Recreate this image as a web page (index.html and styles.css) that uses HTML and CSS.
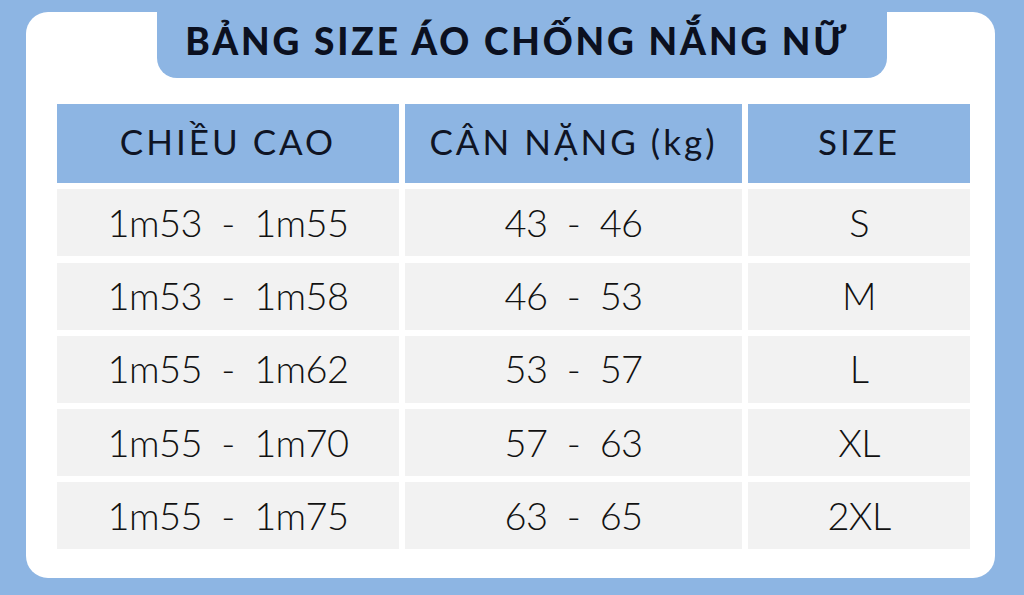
FILE: index.html
```html
<!DOCTYPE html>
<html lang="vi">
<head>
<meta charset="utf-8">
<link rel="stylesheet" href="styles.css">
</head>
<body>
<div class="card">
  <div class="tab"><h1 class="title">BẢNG SIZE ÁO CHỐNG NẮNG NỮ</h1></div>
  <div class="table">
    <div class="cell head">CHIỀU CAO</div>
    <div class="cell head">CÂN NẶNG (kg)</div>
    <div class="cell head">SIZE</div>

    <div class="cell">1m53  -  1m55</div>
    <div class="cell">43  -  46</div>
    <div class="cell">S</div>

    <div class="cell">1m53  -  1m58</div>
    <div class="cell">46  -  53</div>
    <div class="cell">M</div>

    <div class="cell">1m55  -  1m62</div>
    <div class="cell">53  -  57</div>
    <div class="cell">L</div>

    <div class="cell">1m55  -  1m70</div>
    <div class="cell">57  -  63</div>
    <div class="cell">XL</div>

    <div class="cell">1m55  -  1m75</div>
    <div class="cell">63  -  65</div>
    <div class="cell">2XL</div>
  </div>
</div>
</body>
</html>
```
FILE: styles.css
```css
html, body {
  margin: 0;
  padding: 0;
}
body {
  background: #8db5e3;
  width: 1024px;
  height: 595px;
  overflow: hidden;
  font-family: "Lato", "Liberation Sans", sans-serif;
  color: #151515;
}
.card {
  margin: 12px 0 0 26px;
  width: 969px;
  height: 566px;
  background: #ffffff;
  border-radius: 22px;
  box-sizing: border-box;
}
.tab {
  margin-left: 131px;
  width: 730px;
  height: 66px;
  background: #8db5e3;
  border-radius: 0 0 20px 20px;
  display: flex;
  align-items: center;
  justify-content: center;
  box-sizing: border-box;
  padding: 0 10px 10px 0;
}
.title {
  margin: 0;
  font-family: "Lato", sans-serif;
  font-weight: 900;
  font-size: 37px;
  line-height: 1;
  color: #0b1020;
  letter-spacing: 2.9px;
}
.table {
  margin: 26px 0 0 31px;
  width: 913px;
  display: grid;
  grid-template-columns: 342px 337px 222px;
  grid-template-rows: 79px repeat(5, 67px);
  column-gap: 6px;
  row-gap: 6.25px;
}
.cell {
  background: #f2f2f2;
  display: flex;
  align-items: center;
  justify-content: center;
  white-space: pre;
  font-size: 38px;
  font-weight: 300;
  letter-spacing: -0.6px;
  color: #111111;
  padding-bottom: 2px;
  box-sizing: border-box;
}
.head {
  background: #8db5e3;
  font-size: 35px;
  font-weight: 400;
  letter-spacing: 3px;
  color: #0f1424;
  padding-bottom: 6px;
}
```
